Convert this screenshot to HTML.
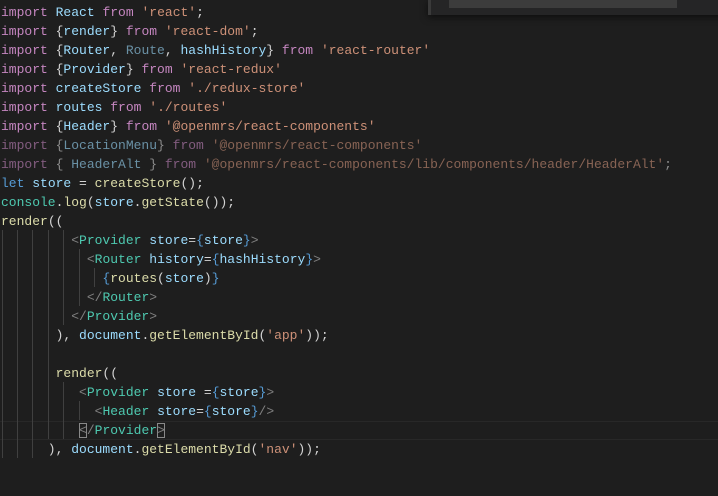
<!DOCTYPE html>
<html><head><meta charset="utf-8"><style>
html,body{margin:0;padding:0;background:#1e1e1e;width:718px;height:496px;overflow:hidden}
.ed{position:relative;width:718px;height:496px;font-family:"Liberation Mono",monospace;font-size:13px;color:#d4d4d4}
.l{position:absolute;left:1px;height:19px;line-height:19px;white-space:pre}
.k{color:#c586c0}.v{color:#9cdcfe}.s{color:#ce9178}.f{color:#dcdcaa}.t{color:#4ec9b0}.b{color:#569cd6}.g{color:#808080}
.dim{opacity:.6}
.gd{position:absolute;width:1px;background:#404040}
.cur{position:absolute;left:0;right:0;top:421px;height:17px;border-top:1px solid #282828;border-bottom:1px solid #282828}
.bx{outline:1px solid #888;outline-offset:-1px}
.fw{position:absolute;left:428px;top:0;width:300px;height:15px;background:#252526;box-shadow:0 2px 8px rgba(0,0,0,.6);border-left:3px solid #3a3a3a;box-sizing:border-box}
.fi{position:absolute;left:18px;top:0;width:228px;height:8px;background:#3c3c3c}
</style></head><body><div class="ed">
<div class="cur"></div>
<div class="gd" style="left:2px;top:230px;height:228px"></div>
<div class="gd" style="left:17px;top:230px;height:228px"></div>
<div class="gd" style="left:32px;top:230px;height:228px"></div>
<div class="gd" style="left:48px;top:230px;height:209px"></div>
<div class="gd" style="left:63px;top:230px;height:95px"></div>
<div class="gd" style="left:79px;top:249px;height:57px"></div>
<div class="gd" style="left:94px;top:268px;height:19px"></div>
<div class="gd" style="left:63px;top:382px;height:57px"></div>
<div class="gd" style="left:79px;top:401px;height:19px"></div>
<div class="l" style="top:3px"><span class="k">import</span> <span class="v">React</span> <span class="k">from</span> <span class="s">'react'</span>;</div>
<div class="l" style="top:22px"><span class="k">import</span> {<span class="v">render</span>} <span class="k">from</span> <span class="s">'react-dom'</span>;</div>
<div class="l" style="top:41px"><span class="k">import</span> {<span class="v">Router</span>, <span class="v dim">Route</span>, <span class="v">hashHistory</span>} <span class="k">from</span> <span class="s">'react-router'</span></div>
<div class="l" style="top:60px"><span class="k">import</span> {<span class="v">Provider</span>} <span class="k">from</span> <span class="s">'react-redux'</span></div>
<div class="l" style="top:79px"><span class="k">import</span> <span class="v">createStore</span> <span class="k">from</span> <span class="s">'./redux-store'</span></div>
<div class="l" style="top:98px"><span class="k">import</span> <span class="v">routes</span> <span class="k">from</span> <span class="s">'./routes'</span></div>
<div class="l" style="top:117px"><span class="k">import</span> {<span class="v">Header</span>} <span class="k">from</span> <span class="s">'@openmrs/react-components'</span></div>
<div class="l dim" style="top:136px"><span class="k">import</span> {<span class="v">LocationMenu</span>} <span class="k">from</span> <span class="s">'@openmrs/react-components'</span></div>
<div class="l dim" style="top:155px"><span class="k">import</span> { <span class="v">HeaderAlt</span> } <span class="k">from</span> <span class="s">'@openmrs/react-components/lib/components/header/HeaderAlt'</span>;</div>
<div class="l" style="top:174px"><span class="b">let</span> <span class="v">store</span> = <span class="f">createStore</span>();</div>
<div class="l" style="top:193px"><span class="t">console</span>.<span class="f">log</span>(<span class="v">store</span>.<span class="f">getState</span>());</div>
<div class="l" style="top:212px"><span class="f">render</span>((</div>
<div class="l" style="top:231px">         <span class="g">&lt;</span><span class="t">Provider</span> <span class="v">store</span>=<span class="b">{</span><span class="v">store</span><span class="b">}</span><span class="g">&gt;</span></div>
<div class="l" style="top:250px">           <span class="g">&lt;</span><span class="t">Router</span> <span class="v">history</span>=<span class="b">{</span><span class="v">hashHistory</span><span class="b">}</span><span class="g">&gt;</span></div>
<div class="l" style="top:269px">             <span class="b">{</span><span class="f">routes</span>(<span class="v">store</span>)<span class="b">}</span></div>
<div class="l" style="top:288px">           <span class="g">&lt;/</span><span class="t">Router</span><span class="g">&gt;</span></div>
<div class="l" style="top:307px">         <span class="g">&lt;/</span><span class="t">Provider</span><span class="g">&gt;</span></div>
<div class="l" style="top:326px">       ), <span class="v">document</span>.<span class="f">getElementById</span>(<span class="s">'app'</span>));</div>
<div class="l" style="top:364px">       <span class="f">render</span>((</div>
<div class="l" style="top:383px">          <span class="g">&lt;</span><span class="t">Provider</span> <span class="v">store</span> =<span class="b">{</span><span class="v">store</span><span class="b">}</span><span class="g">&gt;</span></div>
<div class="l" style="top:402px">            <span class="g">&lt;</span><span class="t">Header</span> <span class="v">store</span>=<span class="b">{</span><span class="v">store</span><span class="b">}</span><span class="g">/&gt;</span></div>
<div class="l" style="top:421px">          <span class="g bx">&lt;</span><span class="g">/</span><span class="t">Provider</span><span class="g bx">&gt;</span></div>
<div class="l" style="top:440px">      ), <span class="v">document</span>.<span class="f">getElementById</span>(<span class="s">'nav'</span>));</div>
<div class="fw"><div class="fi"></div></div>
</div></body></html>
